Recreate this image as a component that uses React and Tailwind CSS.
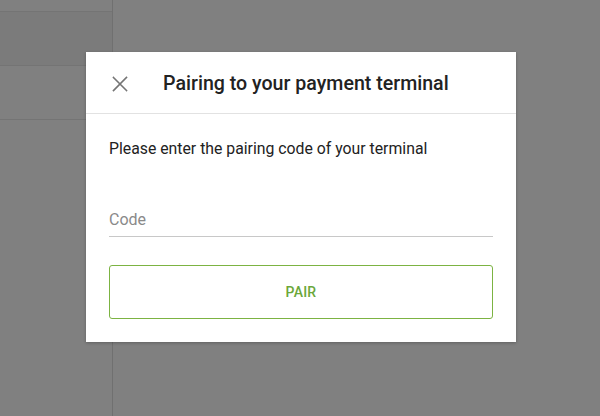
import { useState } from "react";

function CloseIcon() {
  return (
    <svg width="16" height="16" viewBox="0 0 16 16" fill="none">
      <path d="M1.5 1.5l13 13M14.5 1.5l-13 13" stroke="#757575" strokeWidth="1.6" strokeLinecap="square" />
    </svg>
  );
}

export default function App() {
  const [code, setCode] = useState("");

  return (
    <div
      className="relative flex h-[416px] w-[600px] overflow-hidden bg-[#808080]"
      style={{ fontFamily: "Roboto, 'Noto Sans', sans-serif" }}
    >
      {/* background page, dimmed */}
      <div className="flex w-[113px] flex-col border-r border-[#707070]">
        <div className="h-[12px] border-b border-[#747474]" />
        <div className="h-[54px] border-b border-[#747474] bg-[#7b7b7b]" />
        <div className="h-[54px] border-b border-[#747474]" />
        <div className="flex-1" />
      </div>
      <div className="flex-1" />

      <div className="absolute left-[86px] top-[52px] w-[430px] bg-white shadow-[0_1px_3px_rgba(0,0,0,0.25)]">
        <div className="flex h-[62px] items-center border-b border-[#e2e2e2] pl-[26px] pt-[2px]">
          <button type="button" className="flex h-[16px] w-[16px] items-center justify-center">
            <CloseIcon />
          </button>
          <h2 className="ml-[35px] text-[19.6px] font-medium text-[#222]">
            Pairing to your payment terminal
          </h2>
        </div>

        <div className="px-[23px] pb-[23px] pt-[24px]">
          <p className="text-[15.8px] leading-[22px] text-[#222]">
            Please enter the pairing code of your terminal
          </p>

          <input
            value={code}
            onChange={(e) => setCode(e.target.value)}
            placeholder="Code"
            className="mt-[46px] block h-[31px] w-full border-b border-[#c8c8c8] bg-transparent pb-[3px] text-[16px] text-[#222] outline-none placeholder:text-[#8a8a8a]"
          />

          <button
            type="button"
            className="mt-[28px] flex h-[54px] w-full items-center justify-center rounded-[3px] border border-[#7cb342] text-[14px] font-medium tracking-[0.2px] text-[#6ba73a]"
          >
            PAIR
          </button>
        </div>
      </div>
    </div>
  );
}
